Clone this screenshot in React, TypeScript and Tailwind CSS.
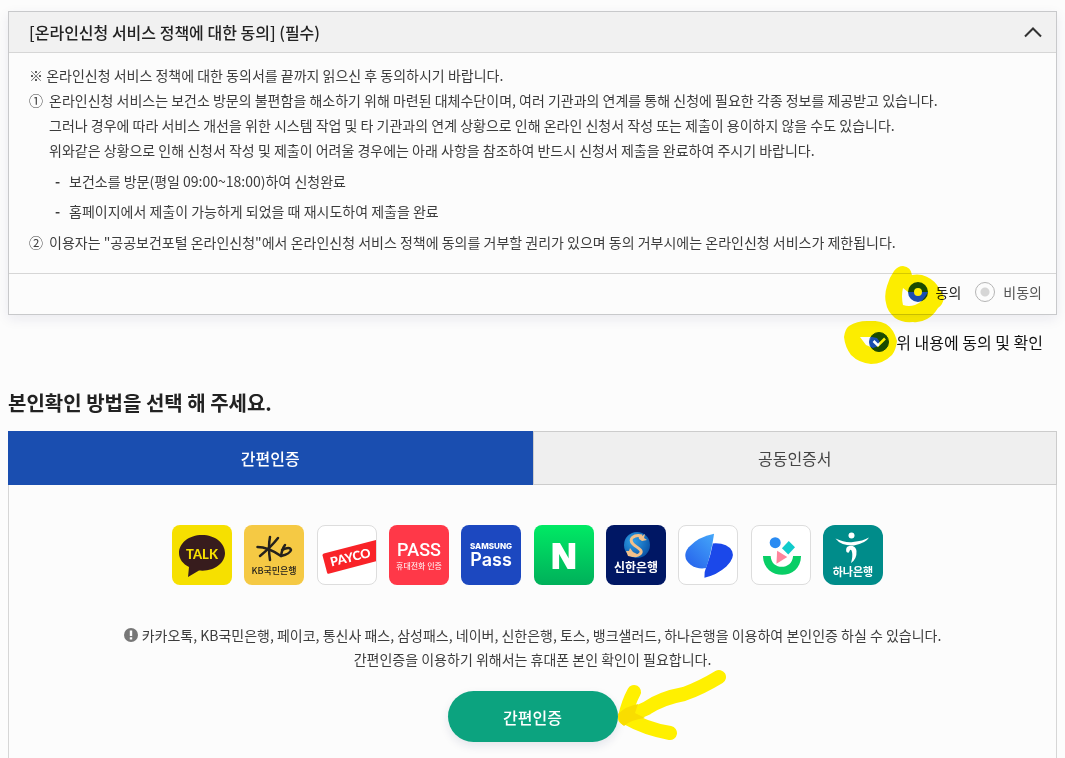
import { useState } from "react";
import type { ReactNode } from "react";

// ─── Highlighter marks ────────────────────────────────────────────────────────
function RadioMark() {
    return (
        <svg className="pointer-events-none absolute -top-4 -left-[23px] h-[58px] w-[60px] mix-blend-multiply" viewBox="884 266 60 58" fill="#fff000" aria-hidden="true">
            <path
                fillRule="evenodd"
                d="M893 271Q897 266 902 266Q910 267 911 275Q916 274 921 275Q931 278 936 285Q940 291 943 297Q942 305 937 308Q932 316 926 319Q919 323 912 322Q901 323 894 318Q886 311 885 303Q883 295 886 286Q888 278 893 271ZM902 288Q900 296 902 305Q908 307 914 305Q921 303 927 292L907 292Z"
            />
            <circle cx="917" cy="292" r="4" />
        </svg>
    );
}

function CheckMark() {
    return (
        <svg className="pointer-events-none absolute -top-[11px] -left-[25px] h-[44px] w-[54px] mix-blend-multiply" viewBox="845 321 54 44" fill="#fff000" aria-hidden="true">
            <path
                fillRule="evenodd"
                d="M850 326Q858 321 868 321Q879 320 887 324Q895 329 898 341Q897 350 893 355Q884 364 872 364Q860 363 852 355Q846 347 845 337Q846 329 850 326ZM861 337L873 337L878 338Q882 342 880 346L874 348L867 345Z"
            />
        </svg>
    );
}

function ArrowMark() {
    return (
        <svg className="pointer-events-none absolute -top-[23px] left-[168px] h-[74px] w-[112px]" viewBox="616 668 112 74" fill="none" stroke="#fff000" strokeWidth="14" strokeLinecap="round" aria-hidden="true">
            <path d="M719 677Q701 688 684 694Q662 698 647 708L625 718" />
            <path d="M634 692Q628 703 625 717" />
            <path d="M625 717Q646 729 670 733" />
            <path d="M618 714Q626 706 638 704L635 713L645 718Q630 720 624 726Q618 722 618 714Z" fill="#f9dd00" stroke="none" />
        </svg>
    );
}

// ─── Provider logos ───────────────────────────────────────────────────────────
const KR = "'Noto Sans CJK KR', sans-serif";

const providers: { name: string; tile: string; logo: ReactNode }[] = [
    {
        name: "카카오톡",
        tile: "rounded-lg bg-[#f6e000]",
        logo: (
            <>
                <path d="M30 10C17 10 7 18 7 28C7 34 11 39 17 42L16 52L27 45.500C42 47 53 38 53 28C53 18 43 10 30 10Z" fill="#371c1d" />
                <text x="30" y="33.500" textAnchor="middle" fontFamily="Lato, sans-serif" fontWeight="900" fontSize="13" fill="#f6e000">TALK</text>
            </>
        ),
    },
    {
        name: "KB국민은행",
        tile: "rounded-lg bg-[#f5c944]",
        logo: (
            <>
                <g fill="none" stroke="#25211c" strokeWidth="2.500" strokeLinecap="round" strokeLinejoin="round">
                    <path d="M26 12Q24 22 26 35" />
                    <path d="M34 13Q27 22 16 31" />
                    <path d="M13.500 22Q24 22 37 31Q46 29 47 25Q46 21 38 25" />
                    <path d="M41 20Q38 24 37 31" />
                </g>
                <text x="30" y="49" textAnchor="middle" fontFamily={KR} fontWeight="500" fontSize="9" fill="#25211c">KB국민은행</text>
            </>
        ),
    },
    {
        name: "페이코",
        tile: "rounded-lg border border-[#dddddd] bg-white",
        logo: (
            <>
                <path d="M6 28.500L60 14.500V36.500L11 49.500Q10 49.500 9.500 48.500L4.700 30.500Q4.500 29 6 28.500Z" fill="#f92328" />
                <text x="14" y="42" transform="rotate(-14 14 42)" fontFamily="Lato, sans-serif" fontWeight="900" fontSize="13" fill="#fff">PAYCO</text>
            </>
        ),
    },
    {
        name: "통신사 패스",
        tile: "rounded-lg bg-[#ff3848]",
        logo: (
            <>
                <text x="30" y="30.500" textAnchor="middle" fontFamily="Roboto, sans-serif" fontWeight="500" fontSize="18" fill="#fff">PASS</text>
                <text x="30" y="44" textAnchor="middle" fontFamily={KR} fontSize="8" fill="#fff">휴대전화 인증</text>
            </>
        ),
    },
    {
        name: "삼성패스",
        tile: "rounded-lg bg-[#1c48c0]",
        logo: (
            <>
                <text x="30" y="24" textAnchor="middle" fontFamily="Inter, sans-serif" fontWeight="800" fontSize="8" fill="#fff">SAMSUNG</text>
                <text x="30" y="41" textAnchor="middle" fontFamily="Inter, sans-serif" fontWeight="600" fontSize="18" fill="#fff">Pass</text>
            </>
        ),
    },
    {
        name: "네이버",
        tile: "rounded-lg bg-linear-to-b from-[#00ea64] to-[#00b05a]",
        logo: (
            <text x="30" y="42.500" textAnchor="middle" fontFamily="'Liberation Sans', sans-serif" fontWeight="700" fontSize="35" fill="#fff" stroke="#fff" strokeWidth="2">N</text>
        ),
    },
    {
        name: "신한은행",
        tile: "rounded-lg bg-[#001764]",
        logo: (
            <>
                <defs>
                    <radialGradient id="globe" cx="0.35" cy="0.35" r="0.7">
                        <stop offset="0" stopColor="#2fa0e8" />
                        <stop offset="1" stopColor="#0b55a8" />
                    </radialGradient>
                </defs>
                <circle cx="31" cy="20" r="13" fill="url(#globe)" />
                <path d="M36 11C28 9 22 14 27 19C31 23 38 25 34 29C32 31 29 31 26 30" fill="none" stroke="#f3c08a" strokeWidth="3" />
                <path d="M32 9L36 11L39 9L38 13L41 15L36 16L33 14ZM20 26L23 26L24 23L27 27L31 29L27 32L22 31Z" fill="#f3c08a" />
                <text x="30" y="47" textAnchor="middle" fontFamily={KR} fontWeight="700" fontSize="12" fill="#fff">신한은행</text>
            </>
        ),
    },
    {
        name: "토스",
        tile: "rounded-lg border border-[#dddddd] bg-white",
        logo: (
            <>
                <defs>
                    <linearGradient id="tossLeft" x1="1" y1="0" x2="0.2" y2="1">
                        <stop offset="0" stopColor="#45a8fa" />
                        <stop offset="1" stopColor="#2765ec" />
                    </linearGradient>
                </defs>
                <path d="M35 18Q50 17 55 26Q58 33 49 42Q39 51 26.300 53.500Q26 47 28 43Q33 30 35 18Z" fill="#1b48ea" />
                <path d="M36.300 8Q20 11 10 22Q2 32 12 40Q19 45 28 43.500Q33 30 36.300 8Z" fill="url(#tossLeft)" />
            </>
        ),
    },
    {
        name: "뱅크샐러드",
        tile: "rounded-lg border border-[#dddddd] bg-white",
        logo: (
            <>
                <circle cx="24" cy="17.300" r="5.700" fill="#2a8bf2" />
                <path d="M38 15.500L44.500 22L37.500 29.500L31 23Z" fill="#10cbcb" />
                <path d="M26 25.500L36.500 32L25.300 39Z" fill="#ff849c" />
                <path d="M11.300 31H19.300C20 46 41.500 46 42.500 31H50.700C50.500 57 12 57 11.300 31Z" fill="#09ce66" />
            </>
        ),
    },
    {
        name: "하나은행",
        tile: "rounded-xl bg-[#008c8a]",
        logo: (
            <>
                <circle cx="28.500" cy="10.500" r="3" fill="#fff" />
                <path d="M12.500 13.500Q22 18 30 17Q40 16 46 12.500Q43 18 31 20.500Q18 21 12.500 13.500Z" fill="#fff" />
                <path d="M23.500 27C21 19 33 19 33.500 26Q34 34 28 38Q30 31 29 27Q28 23 26.500 26Q26 29 23.500 27Z" fill="#fff" />
                <text x="30" y="50.500" textAnchor="middle" fontFamily={KR} fontWeight="700" fontSize="11" fill="#fff">하나은행</text>
            </>
        ),
    },
];

function ProviderButton({ name, tile, logo }: { name: string; tile: string; logo: ReactNode }) {
    return (
        <button type="button" aria-label={name} className={`size-15 flex-shrink-0 overflow-hidden ${tile}`}>
            <svg className="h-full w-full" viewBox="0 0 60 60" aria-hidden="true">
                {logo}
            </svg>
        </button>
    );
}

// ─── Policy text ──────────────────────────────────────────────────────────────
function PolicyText() {
    return (
        <div className="px-5 pt-[10px] pb-[18px] text-sm leading-[25px] text-[#3c3c3c]">
            <p>※ 온라인신청 서비스 정책에 대한 동의서를 끝까지 읽으신 후 동의하시기 바랍니다.</p>
            <ol>
                <li className="flex">
                    <span className="w-5 flex-shrink-0">①</span>
                    <div>
                        <p>온라인신청 서비스는 보건소 방문의 불편함을 해소하기 위해 마련된 대체수단이며, 여러 기관과의 연계를 통해 신청에 필요한 각종 정보를 제공받고 있습니다.</p>
                        <p>그러나 경우에 따라 서비스 개선을 위한 시스템 작업 및 타 기관과의 연계 상황으로 인해 온라인 신청서 작성 또는 제출이 용이하지 않을 수도 있습니다.</p>
                        <p>위와같은 상황으로 인해 신청서 작성 및 제출이 어려울 경우에는 아래 사항을 참조하여 반드시 신청서 제출을 완료하여 주시기 바랍니다.</p>
                        <ul className="mt-[6px] space-y-[5px] pl-[6px]">
                            <li className="flex">
                                <span className="w-[14px] font-bold">-</span>보건소를 방문(평일 09:00~18:00)하여 신청완료
                            </li>
                            <li className="flex">
                                <span className="w-[14px] font-bold">-</span>홈페이지에서 제출이 가능하게 되었을 때 재시도하여 제출을 완료
                            </li>
                        </ul>
                    </div>
                </li>
                <li className="mt-[6px] flex">
                    <span className="w-5 flex-shrink-0">②</span>
                    <p>이용자는 "공공보건포털 온라인신청"에서 온라인신청 서비스 정책에 동의를 거부할 권리가 있으며 동의 거부시에는 온라인신청 서비스가 제한됩니다.</p>
                </li>
            </ol>
        </div>
    );
}

export default function App() {
    const [agree, setAgree] = useState("yes");
    const [confirmed, setConfirmed] = useState(true);
    const [open, setOpen] = useState(true);
    const [tab, setTab] = useState("simple");

    return (
        <main className="flex min-h-screen flex-col bg-[#fcfcfc] px-2 pt-[11px] font-['Noto_Sans_CJK_KR',sans-serif] text-[#222222]">
            {/* Policy box */}
            <section className="border border-[#c8c9cb] shadow-[0_4px_12px_rgba(20,30,90,0.08)]">
                <h2 className="border-b border-[#d6d6d6] bg-[#f1f1f1]">
                    <button type="button" onClick={() => setOpen(!open)} aria-expanded={open} className="flex h-10 w-full items-center justify-between pr-[14px] pl-5 text-base font-medium">
                        [온라인신청 서비스 정책에 대한 동의] (필수)
                        <svg className="h-3 w-[18px]" viewBox="0 0 18 12" fill="none" stroke="#333333" strokeWidth="2" aria-hidden="true">
                            <path d="M1 10.500L9 2.500L17 10.500" />
                        </svg>
                    </button>
                </h2>
                {open && <PolicyText />}
                <div className="flex h-[41px] items-center justify-end gap-[14px] border-t border-[#d6d6d6] pr-[14px] pb-1 text-sm">
                    <label className="relative flex h-5 items-center gap-2">
                        <input
                            type="radio"
                            name="agree"
                            checked={agree === "yes"}
                            onChange={() => setAgree("yes")}
                            className="size-5 appearance-none rounded-full border border-[#b5b5b5] bg-white checked:border-[6px] checked:border-[#1a4eb0]"
                        />
                        동의
                        <RadioMark />
                    </label>
                    <label className="flex h-5 items-center gap-2 text-[#555555]">
                        <input
                            type="radio"
                            name="agree"
                            checked={agree === "no"}
                            onChange={() => setAgree("no")}
                            className="size-5 appearance-none rounded-full border border-[#b5b5b5] bg-[radial-gradient(circle,#d6d6d6_4px,#fcfcfc_5px)] checked:border-[6px] checked:border-[#1a4eb0]"
                        />
                        비동의
                    </label>
                </div>
            </section>

            {/* Confirmation */}
            <div className="mt-[17px] flex justify-end pr-[14px]">
                <label className="relative flex h-5 items-center gap-[7px] text-base text-[#111111]">
                    <span className="relative size-5">
                        <input
                            type="checkbox"
                            checked={confirmed}
                            onChange={(e) => setConfirmed(e.target.checked)}
                            className="block size-5 appearance-none rounded-full border border-[#b5b5b5] checked:border-[#1a4eb0] checked:bg-[#1a4eb0]"
                        />
                        <svg className="pointer-events-none absolute inset-0" viewBox="0 0 20 20" fill="none" stroke="#ffffff" strokeWidth="2.500" aria-hidden="true">
                            <path d="M4.500 9L9 13.500L16 6.500" />
                        </svg>
                    </span>
                    위 내용에 동의 및 확인
                    <CheckMark />
                </label>
            </div>

            {/* Identity check */}
            <h3 className="mt-9 text-xl leading-[30px] font-bold">본인확인 방법을 선택 해 주세요.</h3>
            <div role="tablist" className="mt-[13px] grid grid-cols-2">
                <button
                    type="button"
                    role="tab"
                    aria-selected={tab === "simple"}
                    onClick={() => setTab("simple")}
                    className="h-[54px] border border-[#cccccc] bg-[#efefef] text-base text-[#444444] aria-selected:border-[#1a4eb0] aria-selected:bg-[#1a4eb0] aria-selected:font-medium aria-selected:text-white"
                >
                    간편인증
                </button>
                <button
                    type="button"
                    role="tab"
                    aria-selected={tab === "joint"}
                    onClick={() => setTab("joint")}
                    className="h-[54px] border border-[#cccccc] bg-[#efefef] text-base text-[#444444] aria-selected:border-[#1a4eb0] aria-selected:bg-[#1a4eb0] aria-selected:font-medium aria-selected:text-white"
                >
                    공동인증서
                </button>
            </div>

            <div role="tabpanel" className="flex flex-1 flex-col items-center border-x border-[#d6d6d6] px-4 pt-10 pb-4">
                <div className="flex w-full max-w-[721px] justify-between gap-2 pr-[10px]">
                    {providers.map((p) => (
                        <ProviderButton key={p.name} {...p} />
                    ))}
                </div>
                <div className="mt-[38px] text-center text-sm leading-6 text-[#3c3c3c]">
                    <p className="flex items-center justify-center gap-1">
                        <svg className="size-[14px]" viewBox="0 0 14 14" aria-hidden="true">
                            <circle cx="7" cy="7" r="7" fill="#777777" />
                            <path d="M5.800 2.500H8.200V8H5.800ZM5.800 9.300H8.200V11.600H5.800Z" fill="#ffffff" />
                        </svg>
                        카카오톡, KB국민은행, 페이코, 통신사 패스, 삼성패스, 네이버, 신한은행, 토스, 뱅크샐러드, 하나은행을 이용하여 본인인증 하실 수 있습니다.
                    </p>
                    <p>간편인증을 이용하기 위해서는 휴대폰 본인 확인이 필요합니다.</p>
                </div>
                <div className="relative mt-5">
                    <button type="button" className="h-[51px] w-[170px] rounded-full bg-[#0ca37f] text-base font-medium text-white shadow-[0_4px_10px_rgba(20,30,90,0.1)]">
                        간편인증
                    </button>
                    <ArrowMark />
                </div>
            </div>
        </main>
    );
}
